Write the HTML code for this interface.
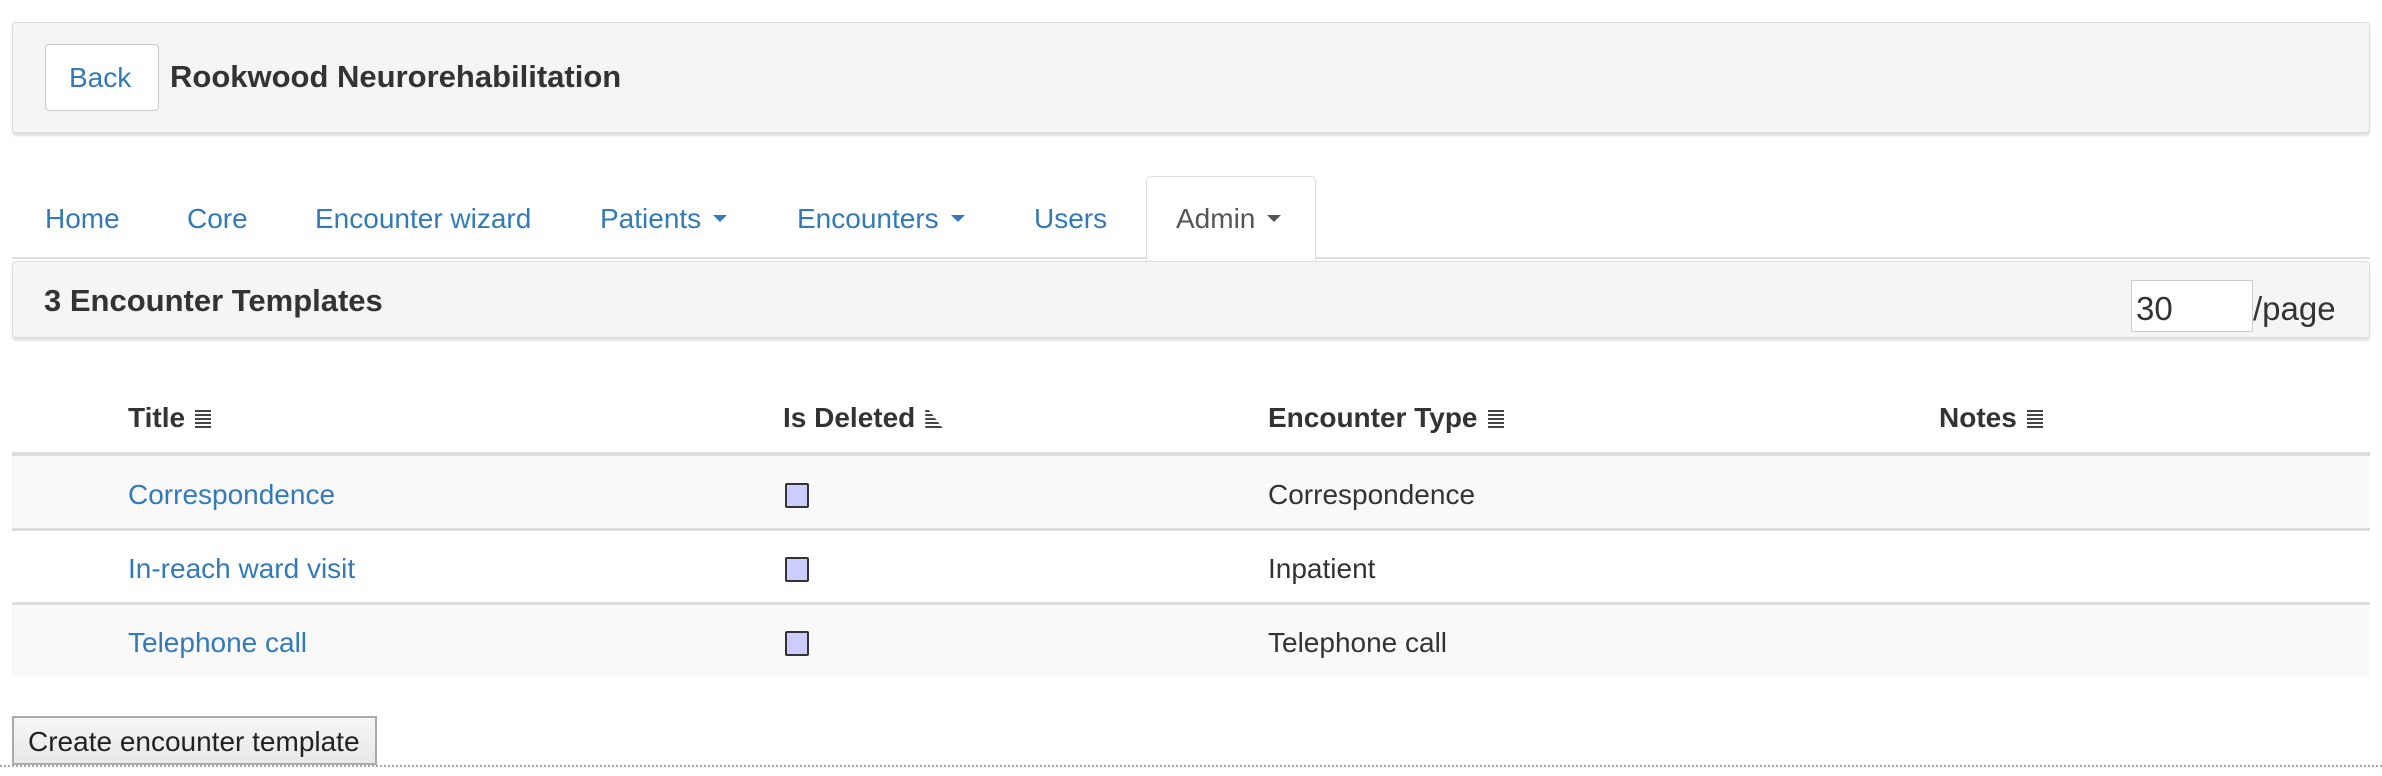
<!DOCTYPE html>
<html><head><meta charset="utf-8"><style>
*{box-sizing:border-box;margin:0;padding:0}
body{width:2382px;height:776px;background:#fff;font-family:"Liberation Sans",Arial,sans-serif;color:#333;position:relative;overflow:hidden}
.a{position:absolute;white-space:nowrap}
.panel{position:absolute;left:12px;width:2358px;background:#f5f5f5;border:1px solid #ddd;border-radius:4px;box-shadow:0 3px 2px rgba(0,0,0,.12)}
.link{color:#337ab7}
.f28{font-size:28px;line-height:28px}
.b{font-weight:bold}
.caret{display:inline-block;width:0;height:0;border-left:7px solid transparent;border-right:7px solid transparent;border-top:7px solid currentColor;vertical-align:middle;margin-left:12px;margin-top:-4px}
.sort{display:inline-block;width:16px;height:19px;margin-left:10px;vertical-align:-2px;background:repeating-linear-gradient(#444 0 2px,transparent 2px 4px)}
.sort2{display:inline-block;width:18px;height:19px;margin-left:10px;vertical-align:-2px;background:repeating-linear-gradient(#444 0 2px,transparent 2px 4px);clip-path:polygon(0 0,20% 0,100% 100%,0 100%)}
.cb{position:absolute;left:785px;width:24px;height:25px;background:#ccf;border:2px solid #333;border-radius:2px}
.row{position:absolute;left:12px;width:2358px}
</style></head><body>
<div class="panel" style="top:22px;height:111px"></div>
<div class="a" style="left:45px;top:44px;width:114px;height:67px;background:#fff;border:1px solid #ccc;border-radius:4px"></div>
<div class="a link f28" style="left:69px;top:64px">Back</div>
<div class="a b" style="left:170px;top:61px;font-size:31px;line-height:31px">Rookwood Neurorehabilitation</div>

<div class="a" style="left:12px;top:257px;width:2358px;height:2px;background:#ddd"></div>
<div class="a" style="left:1146px;top:176px;width:170px;height:85px;background:#fff;border:1px solid #ddd;border-bottom:none;border-radius:5px 5px 0 0"></div>
<div class="a link f28" style="left:45px;top:205px">Home</div>
<div class="a link f28" style="left:187px;top:205px">Core</div>
<div class="a link f28" style="left:315px;top:205px">Encounter wizard</div>
<div class="a link f28" style="left:600px;top:205px">Patients<span class="caret"></span></div>
<div class="a link f28" style="left:797px;top:205px">Encounters<span class="caret"></span></div>
<div class="a link f28" style="left:1034px;top:205px">Users</div>
<div class="a f28" style="left:1176px;top:205px;color:#555">Admin<span class="caret"></span></div>

<div class="panel" style="top:261px;height:77px"></div>
<div class="a b" style="left:44px;top:285px;font-size:31px;line-height:31px">3 Encounter Templates</div>
<div class="a" style="left:2131px;top:280px;width:122px;height:52px;background:#fff;border:1px solid #ccc"></div>
<div class="a" style="left:2136px;top:292px;font-size:33px;line-height:33px">30</div>
<div class="a" style="left:2253px;top:292px;font-size:33px;line-height:33px">/page</div>

<div class="a b f28" style="left:128px;top:404px">Title<span class="sort"></span></div>
<div class="a b f28" style="left:783px;top:404px">Is Deleted<span class="sort2"></span></div>
<div class="a b f28" style="left:1268px;top:404px">Encounter Type<span class="sort"></span></div>
<div class="a b f28" style="left:1939px;top:404px">Notes<span class="sort"></span></div>
<div class="row" style="top:452px;height:4px;background:#ddd"></div>
<div class="row" style="top:456px;height:72px;background:#f9f9f9"></div>
<div class="row" style="top:528px;height:3px;background:#ddd"></div>
<div class="row" style="top:602px;height:3px;background:#ddd"></div>
<div class="row" style="top:605px;height:71px;background:#f9f9f9"></div>

<div class="a link f28" style="left:128px;top:481px">Correspondence</div>
<div class="cb" style="top:483px"></div>
<div class="a f28" style="left:1268px;top:481px">Correspondence</div>
<div class="a link f28" style="left:128px;top:555px">In-reach ward visit</div>
<div class="cb" style="top:557px"></div>
<div class="a f28" style="left:1268px;top:555px">Inpatient</div>
<div class="a link f28" style="left:128px;top:629px">Telephone call</div>
<div class="cb" style="top:631px"></div>
<div class="a f28" style="left:1268px;top:629px">Telephone call</div>

<div class="a" style="left:12px;top:716px;width:365px;height:49px;background:linear-gradient(#f6f6f6,#e8e8e8);border:2px solid #aaa"></div>
<div class="a f28" style="left:28px;top:728px;color:#222">Create encounter template</div>
<div class="a" style="left:0;top:765px;width:2382px;height:2px;border-top:2px dotted #aaa"></div>
</body></html>
